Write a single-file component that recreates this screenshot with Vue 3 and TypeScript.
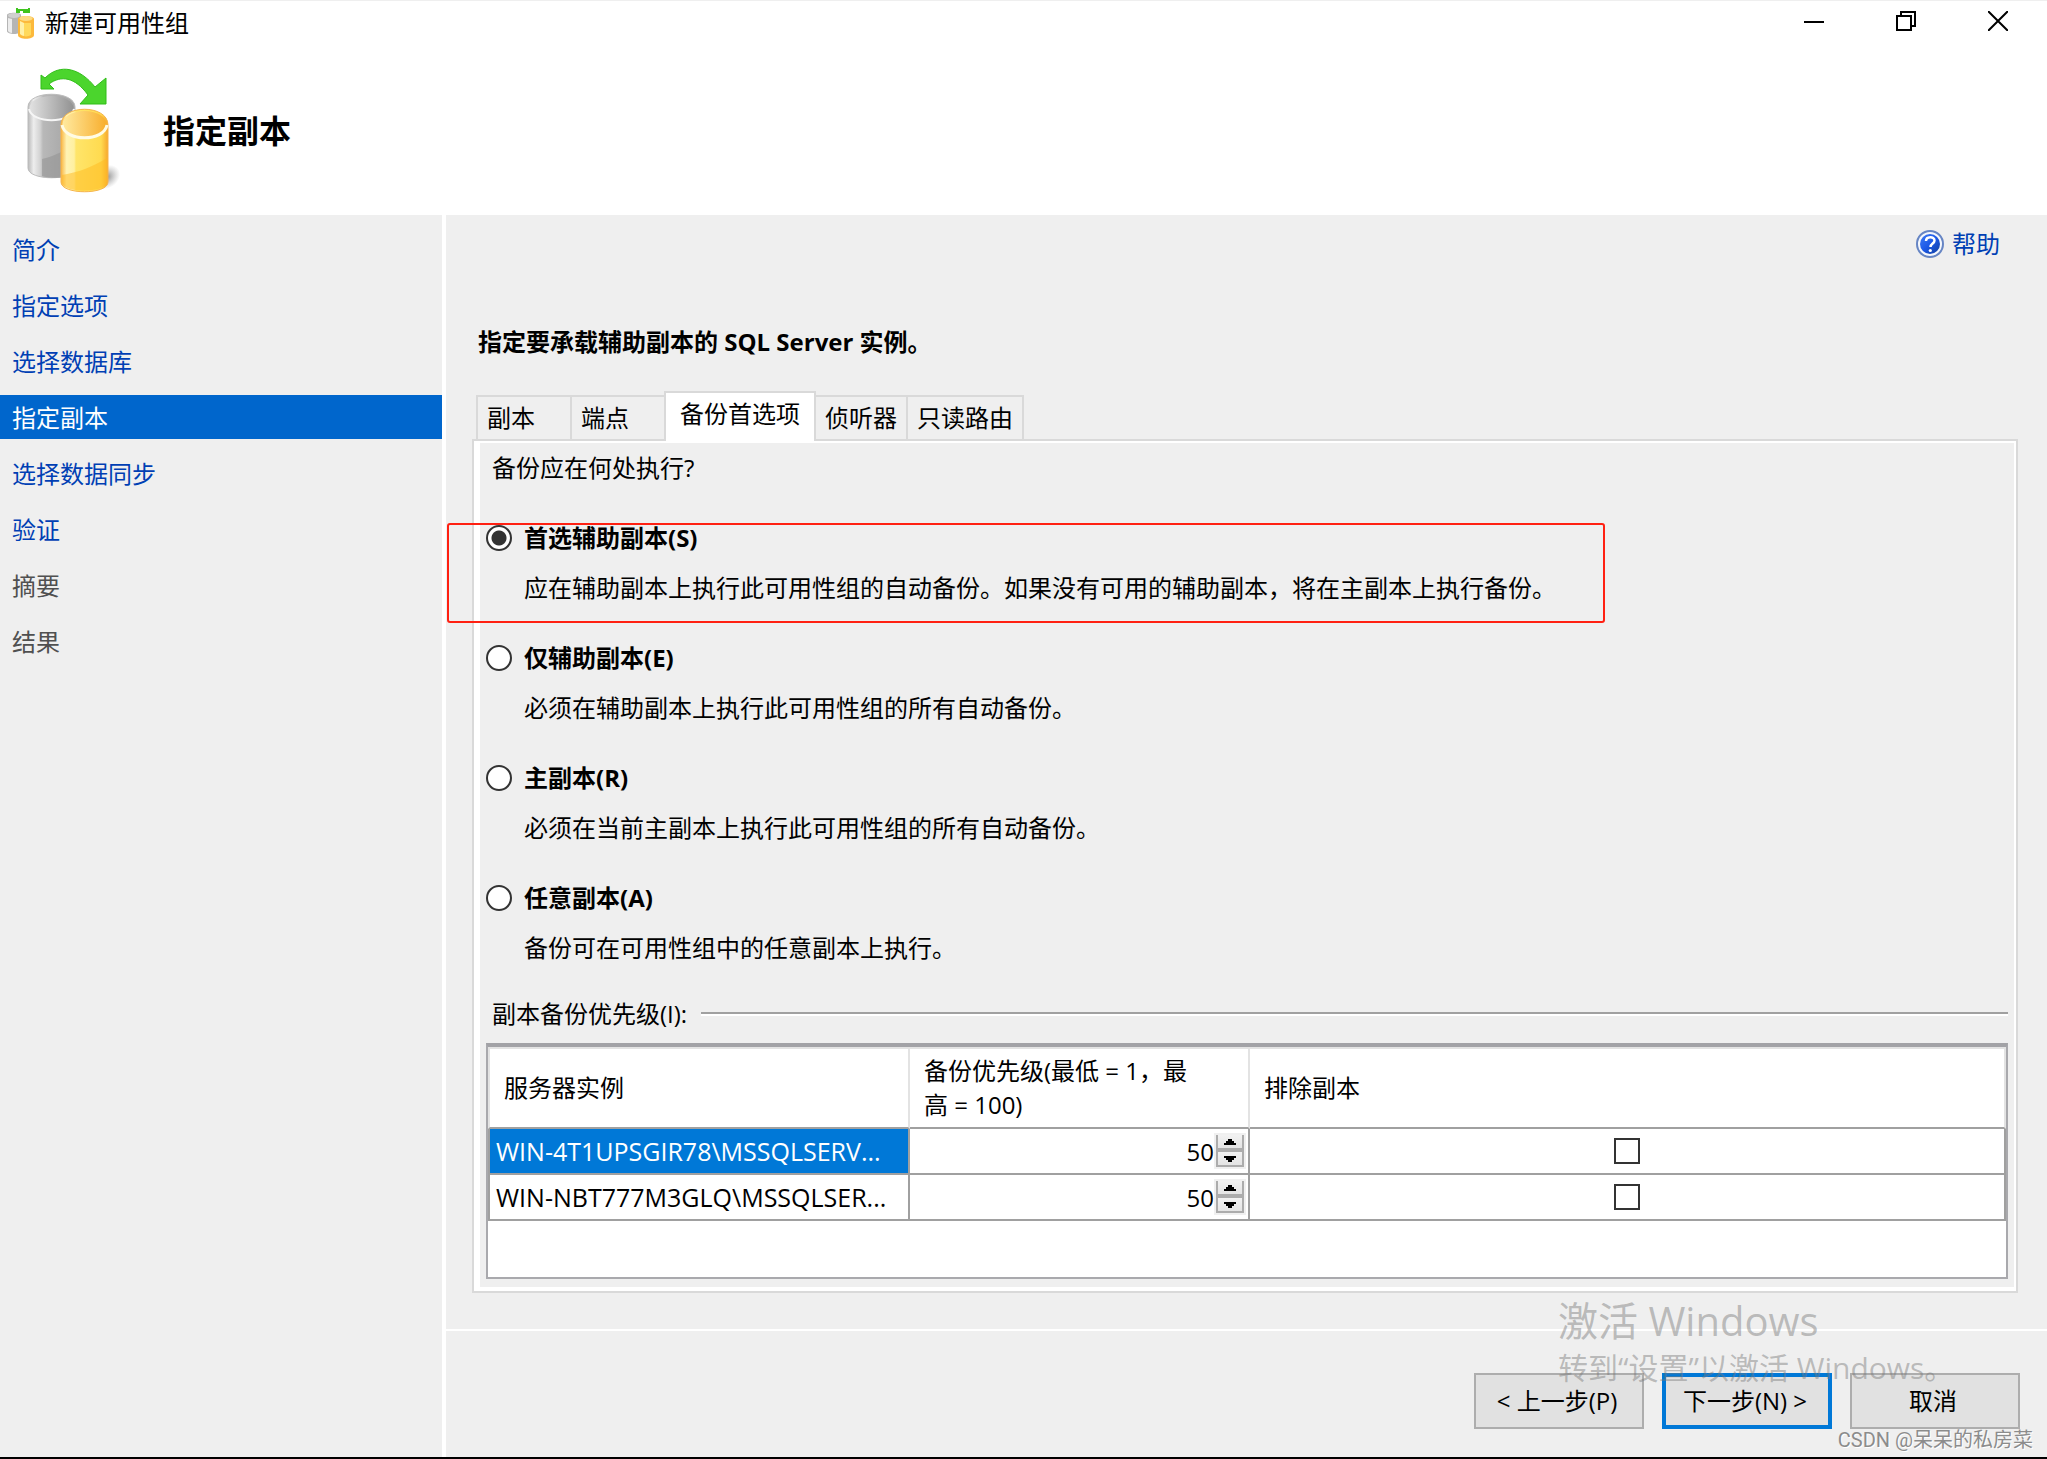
<script setup lang="ts">
import { ref } from 'vue'

interface Step {
  label: string
  state: 'link' | 'current' | 'pending'
}

interface BackupOption {
  value: string
  title: string
  description: string
  highlighted?: boolean
}

interface Replica {
  name: string
  priority: number
  excluded: boolean
  selected: boolean
}

const steps: Step[] = [
  { label: '简介', state: 'link' },
  { label: '指定选项', state: 'link' },
  { label: '选择数据库', state: 'link' },
  { label: '指定副本', state: 'current' },
  { label: '选择数据同步', state: 'link' },
  { label: '验证', state: 'link' },
  { label: '摘要', state: 'pending' },
  { label: '结果', state: 'pending' },
]

const tabs = ['副本', '端点', '备份首选项', '侦听器', '只读路由']
const activeTab = ref('备份首选项')

const options: BackupOption[] = [
  {
    value: 'prefer-secondary',
    title: '首选辅助副本(S)',
    description: '应在辅助副本上执行此可用性组的自动备份。如果没有可用的辅助副本，将在主副本上执行备份。',
    highlighted: true,
  },
  {
    value: 'secondary-only',
    title: '仅辅助副本(E)',
    description: '必须在辅助副本上执行此可用性组的所有自动备份。',
  },
  {
    value: 'primary',
    title: '主副本(R)',
    description: '必须在当前主副本上执行此可用性组的所有自动备份。',
  },
  {
    value: 'any',
    title: '任意副本(A)',
    description: '备份可在可用性组中的任意副本上执行。',
  },
]
const preference = ref('prefer-secondary')

const replicas = ref<Replica[]>([
  { name: 'WIN-4T1UPSGIR78\\MSSQLSERV...', priority: 50, excluded: false, selected: true },
  { name: 'WIN-NBT777M3GLQ\\MSSQLSER...', priority: 50, excluded: false, selected: false },
])

function changePriority(replica: Replica, delta: number): void {
  replica.priority = Math.min(100, Math.max(1, replica.priority + delta))
}
</script>

<template>
  <div class="window">
    <header class="banner">
      <div class="titlebar">
        <svg class="app-icon" viewBox="0 0 28 32" aria-hidden="true">
          <path d="M1 8c0-3 14-3 14 0v16c0 4-14 4-14 0z" fill="#b5b5b5" />
          <path d="M2 11v13c1 1 2 2 4 2V12z" fill="#ececec" />
          <ellipse cx="8" cy="8.500" rx="6" ry="2.500" fill="#d0d0d0" />
          <path d="M12 12c0-4 16-4 16 0v16c0 5-16 5-16 0z" fill="#fcb93c" />
          <path d="M14 14v13c1 1 3 2 4 2V16z" fill="#fff0a8" />
          <path d="M18 16h7v12c-2 1-5 2-7 1z" fill="#ffd95c" />
          <ellipse cx="20" cy="11.500" rx="6.500" ry="2.500" fill="#fbdc86" />
          <path d="M10 1h2v1h10V1h2v5h-7V4h-3v2h-4z" fill="#3fc41f" />
        </svg>
        <span class="window-title">新建可用性组</span>
        <div class="window-controls">
          <button type="button" aria-label="最小化">
            <svg viewBox="0 0 20 20"><path d="M0 11h20" stroke="#000" stroke-width="2" /></svg>
          </button>
          <button type="button" aria-label="还原">
            <svg viewBox="0 0 20 20" fill="none" stroke="#000" stroke-width="2">
              <path d="M1 5h14v14H1z" /><path d="M5 5V1h14v14h-4" />
            </svg>
          </button>
          <button type="button" aria-label="关闭">
            <svg viewBox="0 0 20 20"><path d="M0 0l20 20M20 0L0 20" stroke="#000" stroke-width="2" /></svg>
          </button>
        </div>
      </div>
      <div class="page-head">
        <svg class="page-icon" viewBox="0 0 94 128" aria-hidden="true">
          <defs>
            <linearGradient id="greyBody" x1="0" x2="1" y1="0" y2="0">
              <stop offset="0" stop-color="#b9b9b9" /><stop offset="0.120" stop-color="#ededed" />
              <stop offset="0.260" stop-color="#d2d2d2" /><stop offset="0.320" stop-color="#b8b8b8" />
              <stop offset="1" stop-color="#a2a2a2" />
            </linearGradient>
            <linearGradient id="greyTop" x1="0" x2="1" y1="0" y2="0">
              <stop offset="0" stop-color="#e2e2e2" /><stop offset="1" stop-color="#929292" />
            </linearGradient>
            <linearGradient id="goldBody" x1="0" x2="1" y1="0" y2="0">
              <stop offset="0" stop-color="#f9b541" /><stop offset="0.120" stop-color="#fff3b4" />
              <stop offset="0.280" stop-color="#fff0a0" /><stop offset="0.320" stop-color="#ffe56a" />
              <stop offset="0.850" stop-color="#ffdb50" /><stop offset="1" stop-color="#f7a82c" />
            </linearGradient>
            <linearGradient id="goldTop" x1="0" x2="1" y1="0" y2="0">
              <stop offset="0" stop-color="#ffeaa0" /><stop offset="1" stop-color="#f8ae2d" />
            </linearGradient>
            <radialGradient id="shade">
              <stop offset="0" stop-color="#777" stop-opacity="0.800" /><stop offset="1" stop-color="#999" stop-opacity="0" />
            </radialGradient>
          </defs>
          <ellipse cx="80" cy="110" rx="14" ry="11" fill="url(#shade)" transform="rotate(-35 80 110)" />
          <path d="M1 40C1 23 48 23 48 40v61c0 13-47 13-47 0z" fill="url(#greyBody)" stroke="#bcbcbc" stroke-width="1" />
          <path d="M15 92c14-3 22-8 33-18v32c-10 6-24 6-33 3z" fill="#959595" opacity="0.600" />
          <ellipse cx="24.500" cy="41" rx="22" ry="12" fill="url(#greyTop)" />
          <path d="M2 42c3 15 42 15 45 0" fill="none" stroke="#f6f6f6" stroke-width="2" />
          <path d="M34 58c0-21 47-21 47 0v57c0 13-47 13-47 0z" fill="url(#goldBody)" stroke="#f6b44c" stroke-width="1" />
          <path d="M35 108c18-3 30-8 45-17v24c0 11-45 12-45 0z" fill="#ffb91f" opacity="0.500" />
          <ellipse cx="57.500" cy="57" rx="22" ry="13" fill="url(#goldTop)" />
          <path d="M35 58c3 17 42 17 45 0" fill="none" stroke="#fffbe4" stroke-width="3" />
          <path d="M14 8l4 3C33-4 53 1 68 20l11-9v26H53l8-9C48 10 34 8 22 17l5 5H14z" fill="#4bd52d" stroke="#31bd19" stroke-width="1" />
        </svg>
        <h1>指定副本</h1>
      </div>
    </header>

    <div class="body">
      <nav class="steps">
        <template v-for="step in steps" :key="step.label">
          <span v-if="step.state === 'pending'" class="step pending">{{ step.label }}</span>
          <a v-else href="#" class="step" :class="{ current: step.state === 'current' }">{{ step.label }}</a>
        </template>
      </nav>

      <main class="content">
        <div class="main-area">
          <a class="help" href="#">
            <svg viewBox="0 0 28 28" aria-hidden="true">
              <defs>
                <linearGradient id="helpFill" x1="0" x2="1" y1="0" y2="1">
                  <stop offset="0" stop-color="#3f7cf5" /><stop offset="0.500" stop-color="#1c58e6" />
                  <stop offset="1" stop-color="#123f9c" />
                </linearGradient>
              </defs>
              <circle cx="14" cy="14" r="13" fill="#f4f7fc" stroke="#6685c4" stroke-width="2" />
              <circle cx="14" cy="14" r="10" fill="url(#helpFill)" />
              <path d="M10 11c0-5 8.500-5 8.500-.500 0 3-4 3-4 6.500" fill="none" stroke="#fff" stroke-width="2.500" />
              <circle cx="14.300" cy="20.500" r="1.600" fill="#fff" />
            </svg>
            <span>帮助</span>
          </a>

          <h2>指定要承载辅助副本的 SQL Server 实例。</h2>

          <div class="tabs" role="tablist">
            <button
              v-for="tab in tabs"
              :key="tab"
              type="button"
              role="tab"
              class="tab"
              :class="{ active: tab === activeTab }"
              :aria-selected="tab === activeTab"
              @click="activeTab = tab"
            >{{ tab }}</button>
          </div>

          <section class="panel">
            <div class="panel-inner">
              <p class="question">备份应在何处执行?</p>

              <div class="options">
                <div v-for="option in options" :key="option.value" class="option">
                  <label class="option-title">
                    <input v-model="preference" type="radio" name="preference" :value="option.value" />
                    <span>{{ option.title }}</span>
                  </label>
                  <p class="option-text">{{ option.description }}</p>
                  <div v-if="option.highlighted" class="marker"></div>
                </div>
              </div>

              <div class="group-label">
                <span>副本备份优先级(I):</span>
                <i class="rule"></i>
              </div>

              <div class="grid">
                <table>
                  <colgroup>
                    <col class="col-name" />
                    <col class="col-priority" />
                    <col />
                  </colgroup>
                  <thead>
                    <tr>
                      <th>服务器实例</th>
                      <th>备份优先级(最低 = 1，最高 = 100)</th>
                      <th>排除副本</th>
                    </tr>
                  </thead>
                  <tbody>
                    <tr v-for="replica in replicas" :key="replica.name">
                      <td class="name" :class="{ selected: replica.selected }">{{ replica.name }}</td>
                      <td>
                        <div class="priority">
                          <input v-model.number="replica.priority" type="text" inputmode="numeric" aria-label="备份优先级" />
                          <div class="spinner">
                            <button type="button" aria-label="增加" @click="changePriority(replica, 1)">
                              <svg viewBox="0 0 12 6"><path d="M4 0h4v2h2v2h2v2H0V4h2V2h2z" /></svg>
                            </button>
                            <button type="button" aria-label="减少" @click="changePriority(replica, -1)">
                              <svg viewBox="0 0 12 6"><path d="M0 0h12v2h-2v2H8v2H4V4H2V2H0z" /></svg>
                            </button>
                          </div>
                        </div>
                      </td>
                      <td class="exclude">
                        <input v-model="replica.excluded" type="checkbox" aria-label="排除副本" />
                      </td>
                    </tr>
                  </tbody>
                </table>
              </div>
            </div>
          </section>
        </div>

        <footer class="actions">
          <button type="button">&lt; 上一步(P)</button>
          <button type="button" class="primary">下一步(N) &gt;</button>
          <button type="button">取消</button>
        </footer>
      </main>
    </div>

    <div class="activation">
      <div class="activation-title">激活 Windows</div>
      <div class="activation-text">转到“设置”以激活 Windows。</div>
    </div>
    <div class="credit">CSDN @呆呆的私房菜</div>
  </div>
</template>

<style>
body {
  margin: 0;
}
</style>

<style scoped>
* {
  box-sizing: border-box;
}

.window {
  position: relative;
  display: flex;
  flex-direction: column;
  min-height: 100vh;
  border-top: 1px solid #efefef;
  border-bottom: 2px solid #000;
  background: #fff;
  color: #000;
  font-family: "Open Sans", "Noto Sans CJK SC", sans-serif;
  font-size: 24px;
  line-height: 34px;
}

h1,
h2,
p {
  margin: 0;
}

button,
input {
  margin: 0;
  font: inherit;
  color: inherit;
}

a {
  color: #003fb4;
  text-decoration: none;
}

.banner {
  height: 214px;
}

.titlebar {
  display: flex;
  align-items: center;
  height: 44px;
  padding: 0 3px 0 6px;
}

.app-icon {
  width: 28px;
  height: 32px;
  margin-right: 11px;
}

.window-controls {
  display: flex;
  align-self: stretch;
  margin-left: auto;
}

.window-controls button {
  display: flex;
  justify-content: center;
  width: 92px;
  padding: 10px 0 0;
  border: 0;
  background: none;
}

.window-controls svg {
  width: 20px;
  height: 20px;
}

.page-head {
  display: flex;
  align-items: center;
  gap: 42px;
  padding: 22px 0 0 27px;
}

.page-icon {
  width: 94px;
  height: 128px;
}

h1 {
  font-size: 32px;
  line-height: 40px;
}

.body {
  display: flex;
  flex: 1;
}

.steps {
  display: flex;
  flex: none;
  flex-direction: column;
  gap: 12px;
  width: 446px;
  padding-top: 12px;
  border-right: 4px solid #fff;
  background: #efefef;
}

.step {
  height: 44px;
  padding-left: 12px;
  line-height: 46px;
}

.step.current {
  background: #0066cc;
  color: #fff;
}

.step.pending {
  color: #505050;
}

.content {
  display: flex;
  flex: 1;
  flex-direction: column;
  min-width: 0;
  background: #efefef;
}

.main-area {
  flex: 1;
  padding: 12px 29px 36px 26px;
}

.help {
  display: flex;
  align-items: center;
  gap: 8px;
  width: max-content;
  margin: 0 18px 0 auto;
}

.help svg {
  width: 28px;
  height: 28px;
}

h2 {
  margin: 64px 0 32px 6px;
  font-size: 24px;
  line-height: 34px;
}

.tabs {
  position: relative;
  display: flex;
  align-items: flex-end;
  height: 50px;
  margin: 0 0 -2px 4px;
  padding-bottom: 2px;
}

.tab {
  min-width: 94px;
  height: 44px;
  padding: 0 9px;
  border: 2px solid #d9d9d9;
  border-right-width: 0;
  border-bottom: 0;
  background: #efefef;
  text-align: left;
}

.tab:last-child {
  border-right-width: 2px;
}

.tab.active {
  height: 50px;
  margin-bottom: -2px;
  padding: 0 14px 6px;
  border-right-width: 2px;
  background: #fff;
}

.tab.active + .tab {
  min-width: 0;
  border-left: 0;
}

.panel {
  border: 2px solid #d9d9d9;
}

.panel-inner {
  padding: 8px 6px;
  border: solid #fff;
  border-width: 2px 2px 4px 6px;
}

.question {
  margin: 0 0 36px 6px;
}

.options {
  display: flex;
  flex-direction: column;
  align-items: flex-start;
  gap: 36px;
  margin-bottom: 32px;
}

.option {
  position: relative;
}

.option-title {
  display: flex;
  align-items: center;
  gap: 12px;
  font-weight: 700;
}

.option-title input {
  width: 26px;
  height: 26px;
  border: 2px solid #333;
  border-radius: 50%;
  background: #fff;
  appearance: none;
}

.option-title input:checked {
  background: radial-gradient(circle, #333 7px, #fff 8px);
}

.option-text {
  margin: 16px 0 0 38px;
}

.marker {
  position: absolute;
  top: 2px;
  right: -49px;
  left: -39px;
  height: 100px;
  border: 2px solid #ff2012;
  border-radius: 3px;
  pointer-events: none;
}

.group-label {
  display: flex;
  align-items: center;
  gap: 14px;
  margin: 0 0 12px 6px;
}

.rule {
  flex: 1;
  height: 4px;
  border-top: 2px solid #a0a0a0;
  background: #fff;
}

.grid {
  padding-bottom: 56px;
  border: 2px solid #a9a9ad;
  border-top: 4px solid #a2a2a6;
  background: #fff;
}

table {
  width: 100%;
  border-spacing: 0;
  table-layout: fixed;
}

.col-name {
  width: 422px;
}

.col-priority {
  width: 340px;
}

th {
  height: 82px;
  padding: 0 40px 0 14px;
  border: solid #e3e3e3;
  border-width: 2px 2px 2px 0;
  border-bottom-color: #a0a0a0;
  font-weight: 400;
  text-align: left;
}

th:first-child {
  border-left-width: 2px;
}

td {
  height: 46px;
  padding: 0;
  border: solid #a0a0a0;
  border-width: 0 2px 2px 0;
}

td:first-child {
  border-left-width: 2px;
}

.name {
  overflow: hidden;
  padding-left: 6px;
  font-size: 25px;
  white-space: nowrap;
}

.name.selected {
  background: #0078d7;
  color: #fff;
}

.priority {
  display: flex;
  align-items: center;
  padding-right: 2px;
}

.priority input {
  flex: 1;
  min-width: 0;
  height: 36px;
  padding: 0;
  border: 0;
  background: none;
  text-align: right;
}

.spinner {
  display: flex;
  flex-direction: column;
  width: 32px;
  height: 36px;
  padding: 2px;
  background: #f0f0f0;
}

.spinner button {
  display: flex;
  flex: 1;
  align-items: center;
  justify-content: center;
  padding: 0;
  border: solid #acacac;
  border-width: 0 2px 2px;
  background: linear-gradient(#f2f2f2, #e4e4e4);
}

.spinner button + button {
  border-top-width: 2px;
}

.spinner svg {
  width: 12px;
  height: 6px;
}

.exclude {
  text-align: center;
}

.exclude input {
  display: block;
  width: 26px;
  height: 26px;
  margin: 0 auto;
  border: 2px solid #333;
  background: #fff;
  appearance: none;
}

.exclude input:checked {
  background: #333;
}

.actions {
  display: flex;
  justify-content: flex-end;
  gap: 18px;
  padding: 42px 27px 28px;
  border-top: 2px solid #fff;
}

.actions button {
  width: 170px;
  height: 56px;
  padding: 0 4px 0 0;
  border: 2px solid #adadad;
  background: #e1e1e1;
}

.actions .primary {
  border: 4px solid #0078d7;
}

.activation {
  position: absolute;
  right: 97px;
  bottom: 70px;
  width: 392px;
  color: rgba(120, 120, 120, 0.45);
  white-space: nowrap;
  pointer-events: none;
}

.activation-title {
  margin-bottom: 4px;
  font-size: 40px;
  line-height: 48px;
}

.activation-text {
  font-size: 30px;
  line-height: 38px;
}

.credit {
  position: absolute;
  right: 14px;
  bottom: 5px;
  color: #8c8c8c;
  font-family: Roboto, "Noto Sans CJK SC", sans-serif;
  font-size: 20px;
  line-height: 24px;
  text-shadow: 1px 1px 0 #fff;
}
</style>
